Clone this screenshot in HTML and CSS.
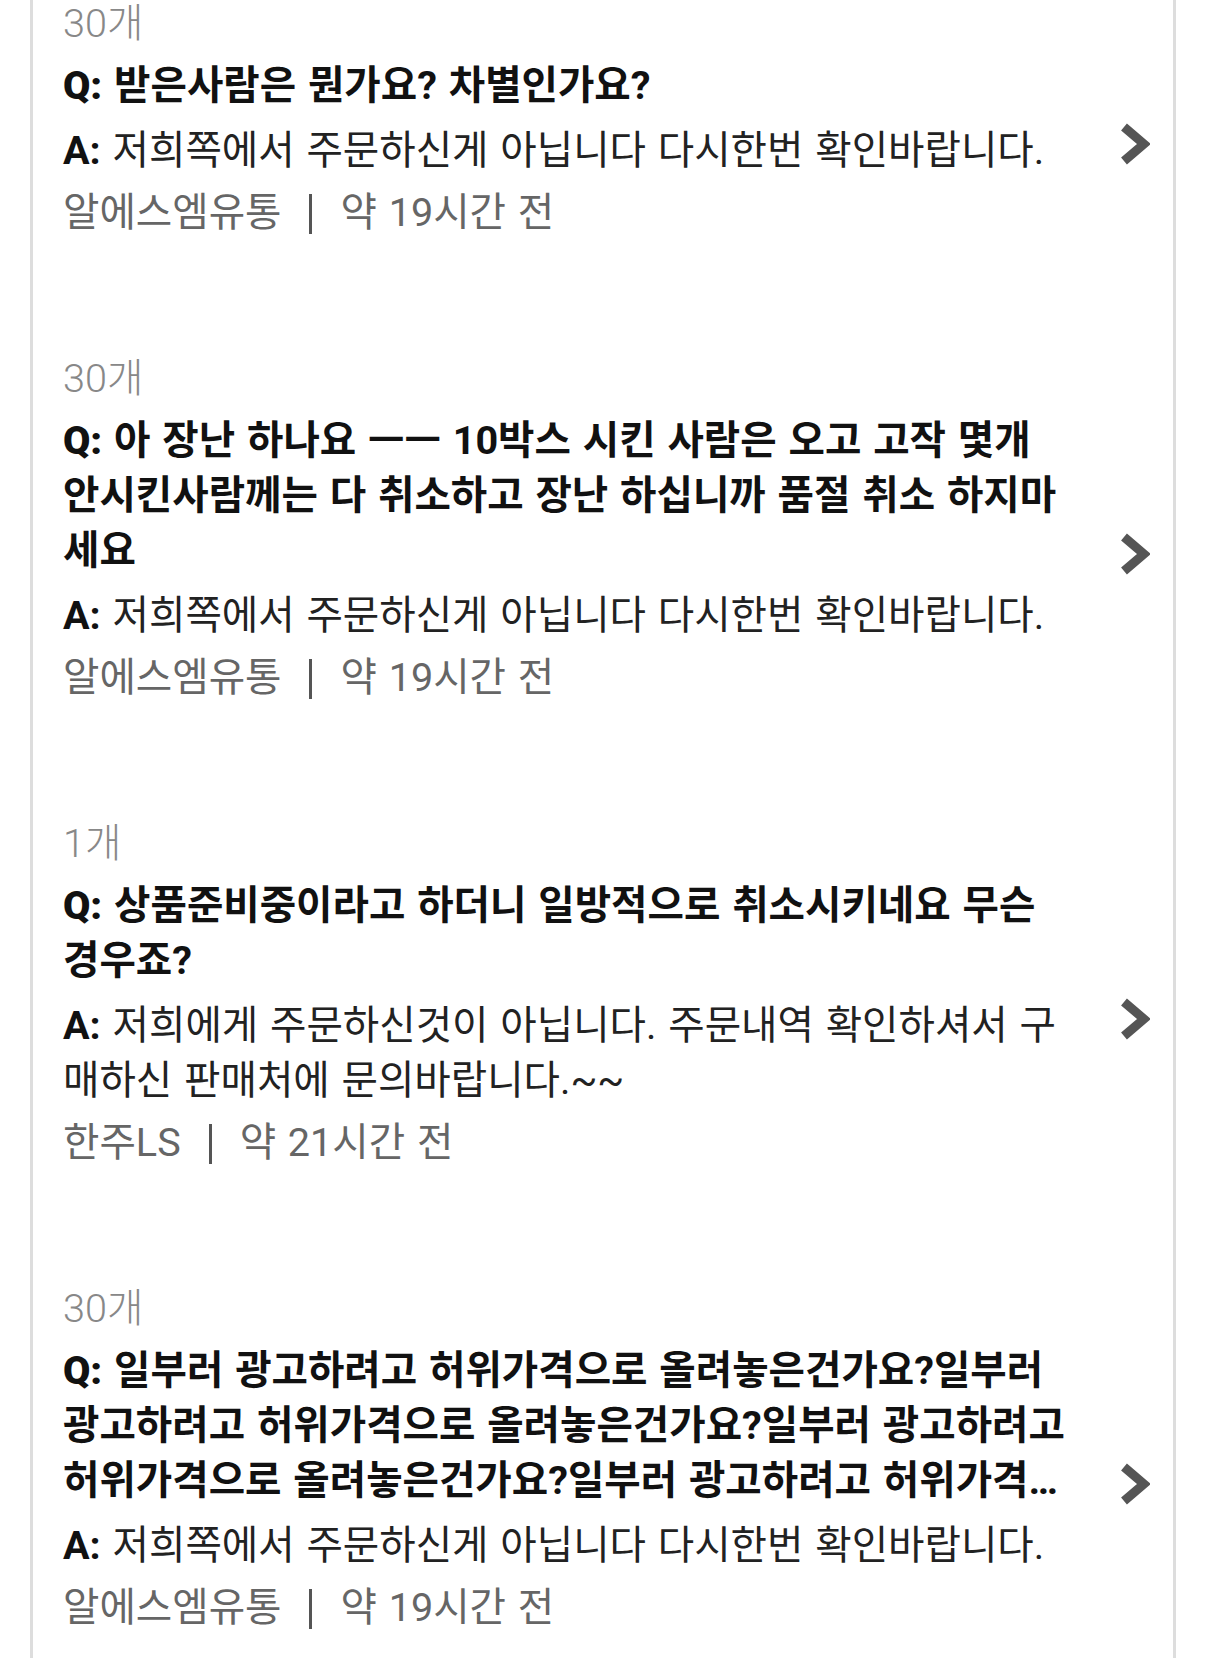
FILE: index.html
```html
<!DOCTYPE html>
<html lang="ko">
<head>
  <meta charset="UTF-8" />
  <meta name="viewport" content="width=device-width, initial-scale=1.0"/>
  <title>상품 문의</title>
  <link rel="stylesheet" href="styles.css">
</head>
<body>
  <div class="qna-list">
    <div class="qna-item">
      <div class="count">30개</div>
      <div class="qna-row">
        <div class="qna-body">
          <div class="question"><b>Q:</b> 받은사람은 뭔가요? 차별인가요?</div>
          <div class="answer"><b>A:</b> 저희쪽에서 주문하신게 아닙니다 다시한번 확인바랍니다.</div>
          <div class="meta">알에스엠유통<span class="sep"></span>약 19시간 전</div>
        </div>
        <svg class="chevron" width="30" height="42" viewBox="0 0 30 42">
          <path d="M4 4 L24 21 L4 38" fill="none" stroke="#555" stroke-width="9"/>
        </svg>
      </div>
    </div>

    <div class="qna-item">
      <div class="count">30개</div>
      <div class="qna-row">
        <div class="qna-body">
          <div class="question"><b>Q:</b> 아 장난 하나요 ㅡㅡ 10박스 시킨 사람은 오고 고작 몇개 안시킨사람께는 다 취소하고 장난 하십니까 품절 취소 하지마세요</div>
          <div class="answer"><b>A:</b> 저희쪽에서 주문하신게 아닙니다 다시한번 확인바랍니다.</div>
          <div class="meta">알에스엠유통<span class="sep"></span>약 19시간 전</div>
        </div>
        <svg class="chevron" width="30" height="42" viewBox="0 0 30 42">
          <path d="M4 4 L24 21 L4 38" fill="none" stroke="#555" stroke-width="9"/>
        </svg>
      </div>
    </div>

    <div class="qna-item">
      <div class="count">1개</div>
      <div class="qna-row">
        <div class="qna-body">
          <div class="question"><b>Q:</b> 상품준비중이라고 하더니 일방적으로 취소시키네요 무슨 경우죠?</div>
          <div class="answer"><b>A:</b> 저희에게 주문하신것이 아닙니다. 주문내역 확인하셔서 구매하신 판매처에 문의바랍니다.~~</div>
          <div class="meta">한주LS<span class="sep"></span>약 21시간 전</div>
        </div>
        <svg class="chevron" width="30" height="42" viewBox="0 0 30 42">
          <path d="M4 4 L24 21 L4 38" fill="none" stroke="#555" stroke-width="9"/>
        </svg>
      </div>
    </div>

    <div class="qna-item">
      <div class="count">30개</div>
      <div class="qna-row">
        <div class="qna-body">
          <div class="question"><b>Q:</b> 일부러 광고하려고 허위가격으로 올려놓은건가요?일부러 광고하려고 허위가격으로 올려놓은건가요?일부러 광고하려고 허위가격으로 올려놓은건가요?일부러 광고하려고 허위가격으로 올려놓은건가요?</div>
          <div class="answer"><b>A:</b> 저희쪽에서 주문하신게 아닙니다 다시한번 확인바랍니다.</div>
          <div class="meta">알에스엠유통<span class="sep"></span>약 19시간 전</div>
        </div>
        <svg class="chevron" width="30" height="42" viewBox="0 0 30 42">
          <path d="M4 4 L24 21 L4 38" fill="none" stroke="#555" stroke-width="9"/>
        </svg>
      </div>
    </div>
  </div>
</body>
</html>
```

FILE: styles.css
```css
body {
  margin: 0;
  background: #fff;
  font-family: Roboto, "Noto Sans CJK KR", sans-serif;
  font-size: 39.6px;
  line-height: 55px;
  word-spacing: 2px;
  color: #222;
}
.qna-list {
  margin: -4px 30px 0;
  border-left: 3px solid #ddd;
  border-right: 3px solid #ddd;
}
.qna-item {
  padding: 0 23px 111px 30px;
}
.count {
  color: #888;
  font-weight: 300;
}
.qna-row {
  display: flex;
  align-items: center;
  margin-top: 7px;
}
.qna-body {
  flex: 1;
  margin-right: 50px;
}
.question {
  font-weight: 700;
  color: #111;
  display: -webkit-box;
  -webkit-box-orient: vertical;
  -webkit-line-clamp: 3;
  overflow: hidden;
}
.answer {
  margin-top: 10px;
}
.answer b {
  color: #111;
}
.meta {
  margin-top: 7px;
  color: #666;
}
.sep {
  display: inline-block;
  width: 3px;
  height: 40px;
  background: #555;
  margin: 0 28px;
  vertical-align: -8px;
}
.chevron {
  flex: none;
  margin-bottom: 10px;
}
```
